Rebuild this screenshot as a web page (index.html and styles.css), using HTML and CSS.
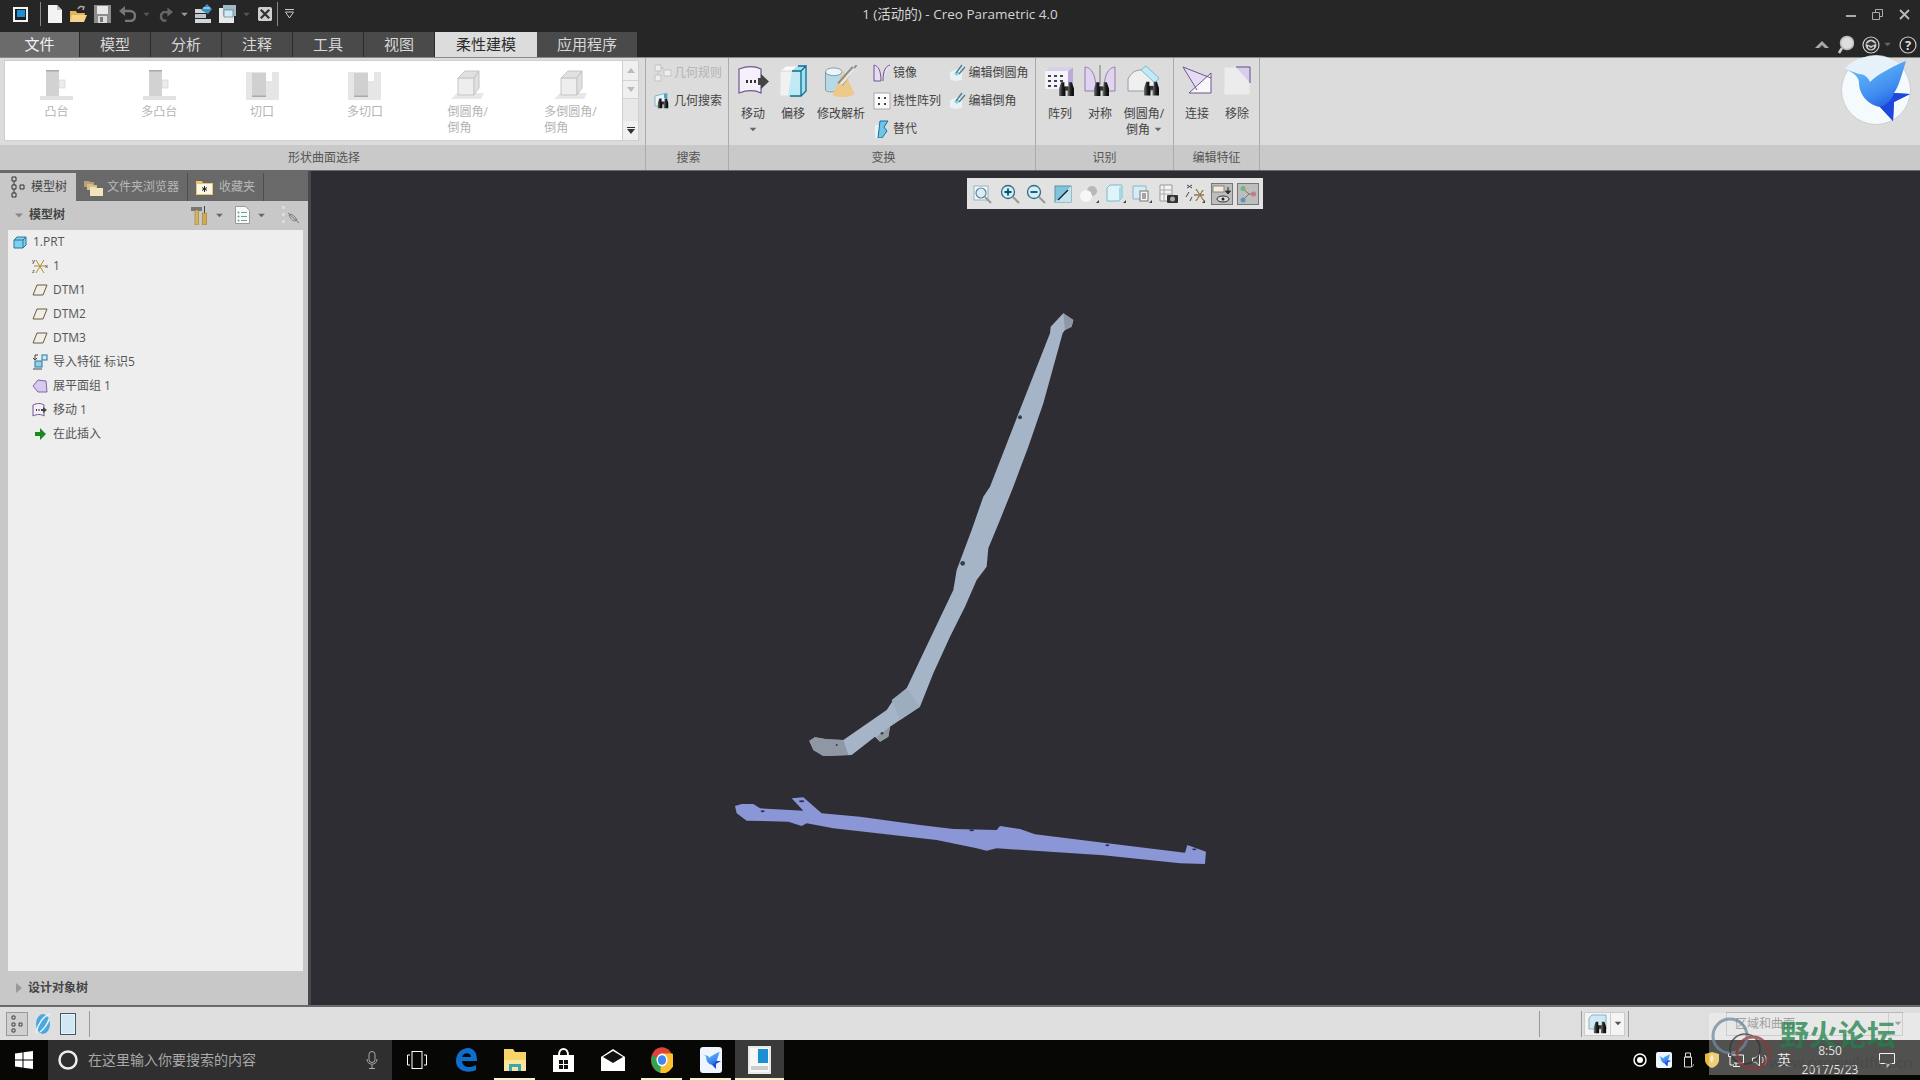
FILE: index.html
```html
<!DOCTYPE html>
<html lang="zh-CN">
<head>
<meta charset="utf-8">
<title>Creo Parametric 4.0</title>
<link rel="stylesheet" href="styles.css">
</head>
<body>
<svg class="sprite" aria-hidden="true">
  <defs>
    <linearGradient id="gbird" x1="0.2" y1="0" x2="0.7" y2="1"><stop offset="0" stop-color="#6cc0f8"/><stop offset=".55" stop-color="#3f8cf0"/><stop offset="1" stop-color="#1238d8"/></linearGradient>
    <linearGradient id="gbino" x1="0" y1="0" x2="1" y2="0"><stop offset="0" stop-color="#777"/><stop offset=".5" stop-color="#222"/><stop offset="1" stop-color="#000"/></linearGradient>
    <symbol id="bird" viewBox="0 0 70 70">
      <path fill="url(#gbird)" d="M4 14 L18 19 C23 19 27 22 29 27 C36 20 50 12 65 6 C61 19 58 31 53 38 L69 39 L53 47 L52 66 L39 52 C27 50 18 39 18 28 C18 22 13 18 4 14 Z"/>
      <path fill="#1c49dc" d="M53 38 L69 39 L53 47 L52 66 L39 52 C46 50 51 45 53 38 Z"/>
    </symbol>
    <symbol id="bino" viewBox="0 0 16 16">
      <path fill="url(#gbino)" d="M3 2h3v4h1v9H1V8z"/>
      <path fill="url(#gbino)" d="M10 2h3l2 6v7H9V6h1z"/>
      <rect x="6.5" y="6" width="3" height="4" fill="#333"/>
    </symbol>
    <symbol id="caret" viewBox="0 0 8 6"><path d="M0 1h8L4 5z"/></symbol>
    <symbol id="datum" viewBox="0 0 16 16"><path d="M5 3h10l-4 10H1z" fill="#efefe8" stroke="#6b5a3c" stroke-width="1"/></symbol>
    <symbol id="pen" viewBox="0 0 18 18">
      <path d="M1 8l8-3 4 3v8l-8 1-4-2z" fill="#e8f2f5"/>
      <path d="M5 10l3-3 3 2-3 3z" fill="#8fd3e6"/>
      <path d="M7 9l6-8M10 10l6-7" stroke="#4b7f92" stroke-width="1.3" fill="none"/>
    </symbol>
    <symbol id="boss" viewBox="0 0 33 30">
      <rect y="26" width="33" height="4" fill="#e2e2e2"/>
      <rect x="6" width="13" height="26" fill="#d2d2d2"/><rect x="6" width="13" height="1.5" fill="#a8a8a8"/>
      <rect x="19" y="10" width="6" height="8" fill="#ececec" stroke="#d6d6d6" stroke-width=".7"/>
    </symbol>
    <symbol id="cut" viewBox="0 0 33 30">
      <rect x="0" y="2" width="33" height="28" fill="#e6e6e6"/>
      <rect x="6" y="3" width="14" height="24" fill="#d0d0d0"/><rect x="6" y="25.500" width="14" height="1.500" fill="#aaa"/>
      <rect x="20" y="2" width="6" height="9" fill="#fff"/>
    </symbol>
    <symbol id="cham" viewBox="0 0 33 30">
      <path d="M0 29l6-6h27l-3 6z" fill="#e8e8e8"/>
      <path d="M7 8h16v17H7z" fill="#eeeeee" stroke="#c6c6c6"/>
      <path d="M7 8l7-7h14l-5 7zM23 8l5-7v17l-5 7z" fill="#e0e0e0" stroke="#c6c6c6"/>
    </symbol>
  </defs>
</svg>

<header class="titlebar">
  <div class="qat">
    <svg width="15" height="15" viewBox="0 0 15 15"><rect width="15" height="15" fill="#f4f4f4"/><rect x="2" y="2" width="11" height="11" fill="#1f1f1f"/><rect x="4" y="3" width="8" height="7" fill="#1b8fd6"/></svg>
    <span class="qsep"></span>
    <svg width="14" height="18" viewBox="0 0 14 18"><path d="M0 0h9l5 5v13H0z" fill="#f3f3f3"/><path d="M9 0v5h5z" fill="#bbb"/></svg>
    <svg width="18" height="18" viewBox="0 0 18 18"><path d="M1 6h6l1 2h8l-2 9H1z" fill="#e3b45a"/><path d="M3 10h15l-3 7H1z" fill="#f3d48a"/><path d="M9 4c1-3 4-3 6-2l-1 3" fill="none" stroke="#aaa" stroke-width="1.500"/></svg>
    <svg width="17" height="18" viewBox="0 0 17 18"><rect width="17" height="18" fill="#8d8d8d"/><rect x="3" y="1" width="11" height="8" fill="#e8e8e8"/><rect x="4" y="11" width="9" height="7" fill="#dcdcdc"/><rect x="6" y="12" width="3" height="5" fill="#777"/></svg>
    <svg width="18" height="16" viewBox="0 0 18 16"><path d="M3 5h9a5 5 0 0 1 0 10H7" fill="none" stroke="#777" stroke-width="2.500"/><path d="M7 0v10L1 5z" fill="#777"/></svg>
    <svg class="qcaret" width="7" height="5"><use href="#caret"/></svg>
    <svg width="17" height="16" viewBox="0 0 18 16"><path d="M15 6H7a5 5 0 0 0 0 9h3" fill="none" stroke="#666" stroke-width="2.500"/><path d="M11 1v10l6-5z" fill="#666"/></svg>
    <svg class="qcaret lit" width="7" height="5"><use href="#caret"/></svg>
    <svg width="17" height="20" viewBox="0 0 17 20"><rect x="0" y="5" width="11" height="4" fill="#cfd6dc"/><rect x="0" y="10" width="11" height="4" fill="#bcc6cc"/><rect x="0" y="15" width="16" height="4" fill="#cfd6dc"/><path d="M6 6l6-6 5 5-4 5z" fill="#3d90c4"/><path d="M8 4h7" stroke="#e6f3fa"/></svg>
    <svg width="17" height="18" viewBox="0 0 17 18"><rect y="3" width="15" height="15" fill="#e9e9e9"/><rect x="4" y="0" width="13" height="11" fill="#9fb9c6"/><rect x="5" y="5" width="9" height="7" fill="#cfeaf4" stroke="#5d7f8f" stroke-width=".7"/></svg>
    <svg class="qcaret" width="7" height="5"><use href="#caret"/></svg>
    <svg class="qclose" width="14" height="14" viewBox="0 0 15 15"><rect width="15" height="15" rx="2" fill="#d0d0d0"/><path d="M3 3l9 9M12 3l-9 9" stroke="#333" stroke-width="2.500"/></svg>
    <span class="qsep qsep-b"></span>
    <svg class="more" width="9" height="10" viewBox="0 0 9 10"><path d="M0 .5h9M.5 3h8L4.500 9z" fill="none" stroke="#c8c8c8"/></svg>
  </div>
  <div class="wintitle">1 (活动的) - Creo Parametric 4.0</div>
  <div class="winctl">
    <svg width="10" height="10" viewBox="0 0 10 10"><path d="M0 7h10" stroke="#aaa" stroke-width="2"/></svg>
    <svg width="11" height="11" viewBox="0 0 11 11"><path d="M.5 3.500h7v7h-7zM3.500 3V.5h7v7H8" fill="none" stroke="#aaa"/></svg>
    <svg width="11" height="11" viewBox="0 0 11 11"><path d="M1 1l9 9M10 1l-9 9" stroke="#bbb" stroke-width="1.800"/></svg>
  </div>
</header>

<nav class="tabbar">
  <div class="tab tab-file">文件</div>
  <div class="tab">模型</div>
  <div class="tab">分析</div>
  <div class="tab">注释</div>
  <div class="tab">工具</div>
  <div class="tab">视图</div>
  <div class="tab tab-active">柔性建模</div>
  <div class="tab tab-app">应用程序</div>
  <div class="helpicons">
    <svg width="14" height="9" viewBox="0 0 14 9"><path d="M0 8l7-7 7 7z" fill="#aaa"/><path d="M4 8l3-3 3 3z" fill="#333"/></svg>
    <svg width="17" height="20" viewBox="0 0 17 20"><circle cx="10" cy="8" r="6.500" fill="#ddd" stroke="#bbb" stroke-width="1.500"/><path d="M5 13l-3 5" stroke="#ccc" stroke-width="2.500"/></svg>
    <svg width="18" height="18" viewBox="0 0 18 18"><circle cx="9" cy="9" r="8" fill="none" stroke="#ccc" stroke-width="1.200"/><circle cx="9" cy="9" r="5.500" fill="#ccc"/><path d="M4 8l5-3 5 3-5 2zM6 10l3 2 3-2v2l-3 1.500L6 12z" fill="#333"/></svg>
    <svg class="hcaret" width="7" height="5"><use href="#caret"/></svg>
    <svg width="18" height="18" viewBox="0 0 18 18"><circle cx="9" cy="9" r="8" fill="#222" stroke="#ccc" stroke-width="1.200"/><text class="helpq" x="9" y="13.500" text-anchor="middle">?</text></svg>
  </div>
</nav>

<section class="ribbon">
  <div class="group g-gallery">
    <div class="gbody gallery-wrap">
      <div class="gallery">
        <div class="gitem"><svg width="33" height="30"><use href="#boss"/></svg><span>凸台</span></div>
        <div class="gitem"><svg width="33" height="30"><use href="#boss"/></svg><span>多凸台</span></div>
        <div class="gitem"><svg width="33" height="30"><use href="#cut"/></svg><span>切口</span></div>
        <div class="gitem"><svg width="33" height="30"><use href="#cut"/></svg><span>多切口</span></div>
        <div class="gitem"><svg width="33" height="30"><use href="#cham"/></svg><span class="left">倒圆角/<br>倒角</span></div>
        <div class="gitem"><svg width="33" height="30"><use href="#cham"/></svg><span class="left">多倒圆角/<br>倒角</span></div>
      </div>
      <div class="scroller">
        <div class="sbtn"><svg width="8" height="6" viewBox="0 0 8 6"><path d="M0 5h8L4 0z" fill="#bbb"/></svg></div>
        <div class="sbtn sbtn-b"><svg width="8" height="6" viewBox="0 0 8 6"><path d="M0 0h8L4 5z" fill="#bbb"/></svg></div>
        <div class="strack"></div>
        <div class="sbtn"><svg width="8" height="7" viewBox="0 0 8 7"><path d="M0 0h8v1H0zM0 2h8L4 7z" fill="#333"/></svg></div>
      </div>
    </div>
    <div class="glabel">形状曲面选择</div>
  </div>

  <div class="group g-search">
    <div class="gbody smallcol">
      <div class="small disabled"><svg width="18" height="18" viewBox="0 0 18 18"><path d="M1 1h6v6H1zM1 11h6v6H1zM10 6h7v6h-7zM7 4h3M4 7v4" fill="#eee" stroke="#c2c2c2"/></svg><span>几何规则</span></div>
      <div class="small"><svg width="18" height="18" viewBox="0 0 18 18"><path d="M1 4l12-3v13H1z" fill="#e8f4f8" stroke="#87b4c4"/><path d="M10 2h3v4h-3z" fill="#4aa5c8"/><use href="#bino" x="3" y="5" width="12" height="12"/></svg><span>几何搜索</span></div>
    </div>
    <div class="glabel">搜索</div>
  </div>

  <div class="group g-trans">
    <div class="gbody rowbody">
      <div class="big w40"><svg width="32" height="32" viewBox="0 0 32 32"><path d="M2 4c8-3 16-3 22 0v24c-6-3-14-3-22 0z" fill="#f6f0fa" stroke="#6f5590" stroke-width="1.200"/><path d="M9 15h2v3H9zM13 15h2v3h-2zM17 15h2v3h-2z" fill="#333"/><path d="M21 13h3v-4l8 7.500-8 7.500v-4h-3z" fill="#444"/></svg><span>移动</span><svg class="bcaret" width="8" height="5"><use href="#caret"/></svg></div>
      <div class="big w40"><svg width="28" height="32" viewBox="0 0 28 32"><path d="M1 6h13v25H1z" fill="#f1f1f1" stroke="#ddd"/><path d="M1 6l6-5h12l-6 5z" fill="#fafafa" stroke="#ddd"/><path d="M13 6h9v25H9z" fill="#bfe9f5"/><path d="M13 6l6-5h8l-5 5zM22 6l5-5v25l-5 5z" fill="#a6e0f0"/><path d="M13 6h9v25H11M22 6l5-5v25l-5 5M19 1h8" fill="none" stroke="#0a6f8f" stroke-width="1.300"/></svg><span>偏移</span></div>
      <div class="big w56"><svg width="34" height="33" viewBox="0 0 34 33"><path d="M1 7h17v19H1z" fill="#b5d9e6"/><ellipse cx="9.500" cy="7" rx="8.500" ry="4" fill="#eef4f8" stroke="#7d9aa8"/><path d="M1 7v19c2 2 6 2 10 1" fill="none" stroke="#7d9aa8"/><path d="M20 6L8 31c6 3 18 3 23-1z" fill="#ecc88a"/><path d="M14 19L29 2M18 21L33 0" stroke="#8a8a8a" stroke-width="1.800"/><path d="M16 19l14-16 2 1-14 17z" fill="#e6e6e6"/></svg><span>修改解析</span></div>
      <div class="smallcol col1">
        <div class="small"><svg width="18" height="18" viewBox="0 0 18 18"><path d="M1 1c4 1 7 5 7 16H1zM17 1c-4 1-7 5-7 16" fill="#e8dcf4" stroke="#6f5590"/></svg><span>镜像</span></div>
        <div class="small"><svg width="18" height="18" viewBox="0 0 18 18"><rect x="1" y="1" width="16" height="16" fill="#fafafa" stroke="#aaa"/><path d="M5 5h2v2H5zM11 5h2v2h-2zM5 11h2v2H5zM11 11h2v2h-2z" fill="#444"/></svg><span>挠性阵列</span></div>
        <div class="small"><svg width="18" height="18" viewBox="0 0 18 18"><path d="M2 5h5v13H2z" fill="#e8f4f8"/><path d="M7 1h8l-4 6 3 4-5 7H5z" fill="#6ec6e6" stroke="#1d6f96"/></svg><span>替代</span></div>
      </div>
      <div class="smallcol col2">
        <div class="small"><svg width="18" height="18"><use href="#pen"/></svg><span>编辑倒圆角</span></div>
        <div class="small"><svg width="18" height="18"><use href="#pen"/></svg><span>编辑倒角</span></div>
      </div>
    </div>
    <div class="glabel">变换</div>
  </div>

  <div class="group g-recog">
    <div class="gbody rowbody recog">
      <div class="big w40"><svg width="32" height="32" viewBox="0 0 32 32"><path d="M1 6l4-4h24v22H1z" fill="#f4f4f8"/><path d="M24 6l5-4v22l-5 4z" fill="#bba9d8"/><path d="M1 6l4-4h24l-5 4z" fill="#d9cfe9"/><path d="M4 10h3v2H4zM10 10h3v2h-3zM16 10h3v2h-3zM4 15h3v2H4zM10 15h3v2h-3zM16 15h3v2h-3zM4 20h3v2H4zM10 20h3v2h-3z" fill="#45405a"/><use href="#bino" x="14" y="15" width="17" height="17"/></svg><span>阵列</span></div>
      <div class="big w36"><svg width="32" height="32" viewBox="0 0 32 32"><path d="M1 2c7 1 11 8 11 24H1z" fill="#e0d4f0" stroke="#7d68a0" stroke-width=".8"/><path d="M31 2c-7 1-11 8-11 24h11z" fill="#e0d4f0" stroke="#7d68a0" stroke-width=".8"/><path d="M16 0v20" stroke="#999" stroke-width="1.500"/><use href="#bino" x="9" y="15" width="17" height="17"/></svg><span>对称</span></div>
      <div class="big w54"><svg width="34" height="32" viewBox="0 0 34 32"><path d="M1 26V14C4 8 8 5 14 5h6l10 12v9z" fill="#eef0f0" stroke="#9a9aa8"/><path d="M14 5l5-4 13 12-4 5z" fill="#bfeaf6" stroke="#7fb8cc"/><use href="#bino" x="16" y="14" width="17" height="18"/></svg><span>倒圆角/<br>倒角<svg class="icaret" width="8" height="5"><use href="#caret"/></svg></span></div>
    </div>
    <div class="glabel">识别</div>
  </div>

  <div class="group g-edit">
    <div class="gbody rowbody edit">
      <div class="big w40"><svg width="30" height="32" viewBox="0 0 30 32"><path d="M1 2l28 11-14 16z" fill="#e5dcf2"/><path d="M29 8v20H7z" fill="#f8f8f8"/><path d="M1 2l28 11M1 2l14 23M29 8v20H7z" fill="none" stroke="#6f5590"/></svg><span>连接</span></div>
      <div class="big w40"><svg width="28" height="30" viewBox="0 0 28 30"><path d="M1 1h12l14 14v14H1z" fill="#ececec" stroke="#ddd"/><path d="M13 1h14v16z" fill="#d9ccec"/><path d="M13 1h14v16" fill="none" stroke="#5e4a88"/></svg><span>移除</span></div>
    </div>
    <div class="glabel">编辑特征</div>
  </div>

  <div class="group g-rest">
    <div class="gbody"></div>
    <div class="glabel"></div>
  </div>

  <svg class="logo" width="70" height="70" viewBox="0 0 70 70"><circle cx="35" cy="35" r="34.500" fill="#f5fafd" stroke="#cfcfcf"/><path d="M4 14C10 5 22 1 35 1c10 0 20 4 26 10L30 28 18 19z" fill="#e6f2fb"/><use href="#bird" width="70" height="70"/></svg>
</section>

<main class="main">
  <aside class="panel">
    <div class="ptabs">
      <div class="ptab ptab-on"><svg width="14" height="22" viewBox="0 0 14 22"><path d="M1 1h4v4H1zM1 9h4v4H1zM1 17h4v4H1zM9 9h4v4H9zM3 5v4M3 13v4" fill="none" stroke="#333"/></svg><span>模型树</span></div>
      <div class="ptab ptab-2"><svg width="19" height="17" viewBox="0 0 19 17"><path d="M0 2h5l1 1h4v5H0z" fill="#b9a078"/><path d="M3 5h5l1 1h4v5H3z" fill="#d5bd90"/><path d="M6 8h5l1 1h7v8H6z" fill="#f1e4b8"/></svg><span>文件夹浏览器</span></div>
      <div class="ptab ptab-3"><svg width="17" height="15" viewBox="0 0 17 15"><path d="M0 1h6l1 2h10v12H0z" fill="#e9c56e"/><rect x="1" y="4" width="15" height="10" fill="#fbf7e6"/><path d="M8.500 6v6M6 7.500l5 3M11 7.500l-5 3" stroke="#222"/></svg><span>收藏夹</span></div>
    </div>
    <div class="phead">
      <svg width="8" height="7"><use href="#caret" class="hd"/></svg>
      <strong>模型树</strong>
      <svg class="t1" width="17" height="19" viewBox="0 0 17 19"><path d="M0 1h11v4H0z" fill="#777"/><rect x="4" y="4" width="3.500" height="15" fill="#d6b45e" stroke="#8a7030" stroke-width=".5"/><rect x="13" y="0" width="1" height="7" fill="#444"/><rect x="11.500" y="7" width="4" height="12" fill="#d6a84a" stroke="#8a7030" stroke-width=".5"/></svg>
      <svg class="hcar" width="7" height="5"><use href="#caret"/></svg>
      <svg class="t2" width="15" height="18" viewBox="0 0 15 18"><path d="M.5.5h10l4 4v13H.500z" fill="#fafafa" stroke="#999"/><path d="M3 6h1v1H3zM3 10h1v1H3zM3 14h1v1H3zM6 6.500h6M6 10.500h6M6 14.500h6" stroke="#6a8"/></svg>
      <svg class="hcar" width="7" height="5"><use href="#caret"/></svg>
      <svg class="t3" width="20" height="18" viewBox="0 0 20 18"><path d="M2 0h3v3H2zM2 7h3v3H2zM2 14h3v3H2z" fill="#dcdcdc"/><path d="M9 9c2-2 5 0 8 5-3 2-6 0-8-5zM8 7l11 10" fill="none" stroke="#777"/></svg>
    </div>
    <ul class="tree">
      <li class="root"><svg width="14" height="13" viewBox="0 0 14 13"><path d="M1 4l3-3h9v8l-3 3H1z" fill="#7fd0ee" stroke="#27769a"/><path d="M1 4h9v8M10 4l3-3" fill="none" stroke="#27769a"/></svg><span>1.PRT</span></li>
      <li><svg width="16" height="16" viewBox="0 0 16 16"><path d="M4 2l8 13M12 2L4 15M2 8h12" stroke="#b08d2c" fill="none"/><text class="axis" x="0" y="5">y</text><text class="axis" x="0" y="15">z</text><text class="axis" x="13" y="10">x</text></svg><span>1</span></li>
      <li><svg width="16" height="16"><use href="#datum"/></svg><span>DTM1</span></li>
      <li><svg width="16" height="16"><use href="#datum"/></svg><span>DTM2</span></li>
      <li><svg width="16" height="16"><use href="#datum"/></svg><span>DTM3</span></li>
      <li><svg width="16" height="16" viewBox="0 0 16 16"><rect x="3" y="7" width="7" height="6" fill="#8fd3ea" stroke="#27769a"/><rect x="10" y="1" width="5" height="5" fill="#cfeaf4" stroke="#27769a"/><path d="M1 15h9M6 1H3v4M1 4l2 2 2-2" fill="none" stroke="#444"/></svg><span>导入特征 标识5</span></li>
      <li><svg width="16" height="16" viewBox="0 0 16 16"><path d="M1 8l5-6 8 1 1 11-9 0z" fill="#d8c9ee" stroke="#7d68a0"/></svg><span>展平面组 1</span></li>
      <li><svg width="16" height="16" viewBox="0 0 16 16"><path d="M1 3c4-2 8-2 11 0v11c-3-2-7-2-11 0z" fill="#f4eef8" stroke="#6f5590"/><path d="M4 7h1v2H4zM6.500 7h1v2h-1z" fill="#333"/><path d="M9 7h2V5l4 3-4 3V9H9z" fill="#444"/></svg><span>移动 1</span></li>
      <li><svg width="16" height="16" viewBox="0 0 16 16"><path d="M3 6h5V2l6 6-6 6v-4H3z" fill="#1c8a22"/></svg><span>在此插入</span></li>
    </ul>
    <div class="pfoot"><svg width="6" height="10" viewBox="0 0 6 10"><path d="M0 0l6 5-6 5z" fill="#999"/></svg><strong>设计对象树</strong></div>
  </aside>

  <div class="viewport">
    <div class="vtools">
      <span class="vt"><svg width="20" height="20" viewBox="0 0 20 20"><rect x="1" y="2" width="14" height="14" fill="#f4f8fa" stroke="#8fb4c4"/><circle cx="8" cy="9" r="5" fill="#dcecf2" stroke="#5f8496" stroke-width="1.200"/><path d="M12 13l6 6" stroke="#999" stroke-width="2"/></svg></span>
      <span class="vt"><svg width="20" height="20" viewBox="0 0 20 20"><circle cx="8" cy="8" r="6.500" fill="#d4edf4" stroke="#2b6f86" stroke-width="1.300"/><path d="M8 4.500v7M4.500 8h7" stroke="#0b4f68" stroke-width="1.800"/><path d="M13 13l6 6" stroke="#999" stroke-width="2"/></svg></span>
      <span class="vt"><svg width="20" height="20" viewBox="0 0 20 20"><circle cx="8" cy="8" r="6.500" fill="#d4edf4" stroke="#2b6f86" stroke-width="1.300"/><path d="M4.500 8h7" stroke="#0b4f68" stroke-width="1.800"/><path d="M13 13l6 6" stroke="#999" stroke-width="2"/></svg></span>
      <span class="vt"><svg width="18" height="18" viewBox="0 0 18 18"><rect x="1" y="1" width="16" height="16" fill="#7fc4da" stroke="#5a93a8"/><path d="M1 17L17 1v16z" fill="#c4e3ec"/><path d="M4 15L14 5" stroke="#123" stroke-width="1.500"/></svg></span>
      <span class="vt"><svg width="20" height="20" viewBox="0 0 20 20"><circle cx="13" cy="7" r="5" fill="#b8b8b8"/><circle cx="7" cy="12" r="6" fill="#f6f6f6"/><path d="M17 19h3v-3z" fill="#444"/></svg></span>
      <span class="vt"><svg width="20" height="20" viewBox="0 0 20 20"><path d="M1 4l3-3h12v13l-3 3H1z" fill="#dff3fa" stroke="#7fb8cc"/><path d="M13 4l3-3v13l-3 3z" fill="#9fd9ea"/><path d="M17 19h3v-3z" fill="#444"/></svg></span>
      <span class="vt"><svg width="20" height="20" viewBox="0 0 20 20"><path d="M1 2h13v13H1z" fill="#d4edf4" stroke="#8fb4c4"/><rect x="8" y="7" width="8" height="10" fill="#f4f4f4" stroke="#777"/><path d="M10 10h4M10 12h4M10 14h4" stroke="#555"/><path d="M17 19h3v-3z" fill="#444"/></svg></span>
      <span class="vt"><svg width="20" height="20" viewBox="0 0 20 20"><path d="M1 1h12v16H1z" fill="#f4f4f4" stroke="#999"/><path d="M1 6h12M1 10h12M5 1v16" stroke="#aaa"/><rect x="8" y="11" width="11" height="8" rx="1" fill="#333"/><circle cx="13.500" cy="15" r="2.500" fill="#aaa"/></svg></span>
      <span class="vt"><svg width="20" height="20" viewBox="0 0 20 20"><path d="M2 1l5 3M7 1L2 4M4 8l-3 5M5 17l2-4M11 5l8 12M18 6L11 17M9 11h10" stroke="#444" fill="none"/><path d="M11 5l8 12M18 6L11 17" stroke="#b08d2c"/><path d="M17 19h3v-3z" fill="#444"/></svg></span>
      <span class="vt vt-on"><svg width="20" height="20" viewBox="0 0 20 20"><rect x="1" y="2" width="11" height="6" fill="#f4ecd8" stroke="#888"/><path d="M16 3v4M13.500 7h5L16 10z" stroke="#333" fill="#333"/><ellipse cx="11" cy="15" rx="6" ry="3" fill="#ddd" stroke="#333"/><circle cx="11" cy="15" r="1.500" fill="#222"/></svg></span>
      <span class="vt vt-on"><svg width="20" height="20" viewBox="0 0 20 20"><path d="M5 5l6 5-6 6M11 10h4" stroke="#777" fill="none"/><circle cx="5" cy="4.500" r="2.500" fill="#6fb87a"/><circle cx="15.500" cy="10" r="2.500" fill="#c67b82"/><circle cx="5" cy="16" r="2.500" fill="#5a96b8"/></svg></span>
    </div>
    <svg class="scene" viewBox="311 171 1609 834" preserveAspectRatio="none" aria-hidden="true">
      <g transform="translate(780 300) scale(.33333)">
        <path fill="#a5b4c6" d="M850 40L880 60L875 80L855 90L848 100L790 310L745 440L700 560L660 660L625 745L620 800L590 840L555 920L510 1010L460 1120L420 1220L360 1260L330 1280L325 1310L300 1325L285 1310L215 1365L130 1368L100 1350L88 1322L105 1312L140 1318L190 1320L320 1230L340 1200L380 1165L420 1080L520 870L530 810L575 690L610 590L630 560L700 380L810 100L812 80Z"/>
        <path fill="#8e97a3" d="M850 40L880 60L875 80L855 90Z"/>
        <path fill="#8e97a3" d="M88 1322L105 1312L140 1318L190 1320L205 1365L130 1368L100 1350Z"/>
        <path fill="#8f98a3" d="M330 1280L325 1310L300 1325L290 1310Z"/>
        <path fill="#9dadc0" d="M380 1165L420 1220L360 1260L335 1200Z"/>
        <g fill="#3a3d46"><circle cx="720" cy="352" r="6"/><circle cx="548" cy="790" r="7"/><circle cx="170" cy="1335" r="3"/><circle cx="306" cy="1300" r="4"/></g>
      </g>
      <g transform="translate(720 780) scale(.33333)">
        <path fill="#8a96d6" d="M45 78L65 72L100 72L120 85L250 92L215 55L250 52L305 100L420 110L600 135L700 147L830 150L840 138L900 147L945 163L1150 188L1395 218L1402 195L1458 215L1455 252L1380 250L1150 226L830 205L800 212L770 205L650 180L340 145L260 130L245 138L205 125L80 122L50 100Z"/>
        <g fill="#2c3060"><ellipse cx="128" cy="94" rx="6" ry="3"/><ellipse cx="245" cy="64" rx="8" ry="3"/><ellipse cx="755" cy="151" rx="7" ry="3"/><ellipse cx="1162" cy="196" rx="6" ry="3"/><ellipse cx="1423" cy="208" rx="7" ry="2.500"/></g>
      </g>
    </svg>
  </div>
</main>

<footer class="status">
  <span class="stbox"><svg width="12" height="18" viewBox="0 0 12 18"><path d="M1 1h3v3H1zM1 8h3v3H1zM1 14h3v3H1zM8 8h3v3H8z" fill="none" stroke="#444"/></svg></span>
  <svg class="stglobe" width="17" height="24" viewBox="0 0 17 24"><ellipse cx="9" cy="12" rx="7" ry="10" fill="#4aa8e0"/><path d="M2 21C4 12 9 4 16 2M6 20c3-2 8-8 9-13" fill="none" stroke="#e8f4f8" stroke-width="1.500"/></svg>
  <svg class="stwin" width="16" height="22" viewBox="0 0 16 22"><rect x=".5" y=".5" width="15" height="21" fill="#e8f4f8" stroke="#456"/><rect x="2" y="2" width="12" height="18" fill="#cfe8f2"/></svg>
  <span class="stsep"></span>
  <span class="stsep s2"></span>
  <span class="stsep s3"></span>
  <span class="stbtn"><svg width="20" height="20" viewBox="0 0 20 20"><path d="M1 4l3-3h14v14H1z" fill="#cfeaf4" stroke="#87b4c4"/><use href="#bino" x="5" y="6" width="14" height="14"/></svg></span>
  <span class="stdrop"><svg width="8" height="5"><use href="#caret"/></svg></span>
  <span class="stsep s4"></span>
  <div class="combo"><span>区域和曲面</span><i></i><svg width="8" height="5"><use href="#caret"/></svg></div>
</footer>

<footer class="taskbar">
  <div class="start"><svg width="18" height="18" viewBox="0 0 18 18"><path d="M0 2.500L7.500 1.500V8.500H0zM8.500 1.300L18 0V8.500H8.500zM0 9.500H7.500V16.500L0 15.500zM8.500 9.500H18V18L8.500 16.700z" fill="#fff"/></svg></div>
  <div class="search">
    <svg width="20" height="20" viewBox="0 0 20 20"><circle cx="10" cy="10" r="8.500" fill="none" stroke="#eee" stroke-width="2.500"/></svg>
    <span>在这里输入你要搜索的内容</span>
    <svg class="mic" width="12" height="18" viewBox="0 0 12 18"><rect x="3" y="0.500" width="6" height="11" rx="3" fill="none" stroke="#aaa"/><path d="M1 8c0 7 10 7 10 0M6 14v3M3 17.500h6" fill="none" stroke="#aaa"/></svg>
  </div>
  <div class="tasks">
    <span class="task"><svg width="20" height="18" viewBox="0 0 20 18"><rect x="5" y=".5" width="10" height="17" fill="none" stroke="#fff"/><path d="M3 4H.5v10H3M17 4h2.500v10H17" fill="none" stroke="#fff"/></svg></span>
    <span class="task"><svg width="22" height="24" viewBox="0 0 22 24"><path d="M1 13C1 5 7 0 13 0c6 0 9 5 9 13H7c0 6 8 8 14 4v5c-8 4-20 1-20-9zM7 9h9c0-5-8-5-9 0z" fill="#0c6fcf"/></svg></span>
    <span class="task on"><svg width="22" height="22" viewBox="0 0 22 22"><path d="M0 0h9l2 3h11v19H0z" fill="#f6d468"/><path d="M0 11h22v11H0z" fill="#fbe79a"/><path d="M5 22v-7h12v7h-3v-4H8v4z" fill="#3aa7b8"/></svg></span>
    <span class="task"><svg width="21" height="24" viewBox="0 0 21 24"><path d="M0 7h21v17H0z" fill="#fff"/><path d="M6 7c0-8 9-8 9 0" fill="none" stroke="#fff" stroke-width="2"/><path d="M6 12h4v4H6zM11 12h4v4h-4zM6 17h4v4H6zM11 17h4v4h-4z" fill="#111"/></svg></span>
    <span class="task"><svg width="24" height="22" viewBox="0 0 24 22"><path d="M0 8L12 0l12 8v14H0z" fill="#fff"/><path d="M2 8l10-6 10 6-10 6z" fill="#111"/><path d="M0 8l12 7 12-7" fill="none" stroke="#fff"/></svg></span>
    <span class="task on"><svg width="22" height="26" viewBox="0 0 24 28"><ellipse cx="12" cy="14" rx="12" ry="14" fill="#db4437"/><path d="M12 14L1.500 9A12 14 0 0 0 10 27.800z" fill="#2aa84f"/><path d="M12 7h11.500A12 14 0 0 1 10 27.800z" fill="#fbc02d"/><ellipse cx="12" cy="14" rx="6" ry="7" fill="#fff"/><ellipse cx="12" cy="14" rx="4.500" ry="5.300" fill="#4285f4"/></svg></span>
    <span class="task on"><span class="birdtile"><svg width="20" height="24" viewBox="0 0 70 70"><use href="#bird"/></svg></span></span>
    <span class="task on active"><svg width="23" height="28" viewBox="0 0 23 28"><rect width="23" height="28" fill="#e8e8e8"/><rect x="2" y="2" width="19" height="24" fill="#f7f7f7"/><rect x="10" y="3" width="10" height="14" fill="#1b8fd6"/><rect x="3" y="20" width="17" height="4" fill="#ccc"/></svg></span>
  </div>
  <div class="tray">
    <span class="ti"><svg width="14" height="14" viewBox="0 0 14 14"><circle cx="7" cy="7" r="6" fill="none" stroke="#fff" stroke-width="1.500"/><circle cx="7" cy="7" r="3" fill="#fff"/></svg></span>
    <span class="ti"><span class="birdtile small-tile"><svg width="14" height="14" viewBox="0 0 70 70"><use href="#bird"/></svg></span></span>
    <span class="ti"><svg width="12" height="16" viewBox="0 0 12 16"><path d="M3.500 1h5v4h-5zM2.500 5h7v10h-7z" fill="none" stroke="#ddd"/><path d="M9 13l1.500 1.500L12 12" stroke="#aaa" fill="none"/></svg></span>
    <span class="ti"><svg width="14" height="16" viewBox="0 0 14 16"><path d="M0 2l7-2 7 2v6c0 4-4 7-7 8-3-1-7-4-7-8z" fill="#e9b93f"/><path d="M7 3c3 3 1 5 0 8-2-2-3-5 0-8z" fill="#f7e7b0"/></svg></span>
    <span class="ti"><svg width="16" height="14" viewBox="0 0 16 14"><path d="M.5.500h3v3h-3zM3.500 2h12v8H6M8 10v3M5 13.500h7M2 4v8h4" fill="none" stroke="#eee"/></svg></span>
    <span class="ti"><svg width="16" height="14" viewBox="0 0 16 14"><path d="M.5 5h3l4-4v12l-4-4h-3z" fill="none" stroke="#ddd"/><path d="M10 4c1.500 2 1.500 4 0 6M12.500 2c2.500 3 2.500 7 0 10" fill="none" stroke="#ddd"/></svg></span>
    <span class="ti ime">英</span>
    <div class="clock"><span>8:50</span><span>2017/5/23</span></div>
    <span class="notif"><svg width="16" height="15" viewBox="0 0 16 15"><path d="M.5.500h15v10h-5l-2.500 4v-4H.5z" fill="none" stroke="#eee"/></svg></span>
  </div>
</footer>

<div class="watermark">
  <svg class="wmlogo" width="72" height="60" viewBox="0 0 72 60"><circle cx="21" cy="21" r="17" fill="none" stroke="#6f8a9e" stroke-width="3"/><circle cx="36" cy="34" r="15" fill="none" stroke="#333" stroke-width="1.500"/><circle cx="44" cy="38" r="16" fill="none" stroke="#8c3a3a" stroke-width="3"/></svg>
  <span class="wmt">野火论坛</span>
  <span class="wmu">www.proewildfire.cn</span>
</div>
</body>
</html>
```

FILE: styles.css
```css
* { box-sizing: border-box; }
html, body { margin: 0; padding: 0; }
body {
  width: 1920px; height: 1080px; overflow: hidden; position: relative;
  display: flex; flex-direction: column;
  font: 12px/16px "Open Sans", "Noto Sans CJK SC", sans-serif;
  color: #444; background: #262626;
}
svg { display: block; flex: none; }
.sprite { position: absolute; width: 0; height: 0; }
ul { list-style: none; margin: 0; padding: 0; }

/* title bar */
.titlebar { height: 32px; flex: none; background: #262626; display: grid; grid-template-columns: 1fr auto 1fr; align-items: center; }
.qat { display: flex; align-items: center; gap: 7px; padding-left: 13px; fill: #666; margin-top: -4px; }
.qsep { width: 1px; height: 24px; background: #888; margin-left: 5px; }
.qsep-b { margin-left: -2px; }
.qclose { margin-left: 1px; }
.qcaret { fill: #555; }
.qcaret.lit { fill: #9a9a9a; }
.wintitle { font-size: 13.5px; color: #d4d4d4; line-height: 20px; margin-top: -4px; }
.winctl { display: flex; justify-content: flex-end; align-items: center; gap: 16px; padding-right: 10px; margin-top: -4px; }

/* main tabs */
.tabbar { height: 25px; flex: none; display: flex; background: #262626; position: relative; }
.tab { width: 71px; display: flex; align-items: center; justify-content: center; padding-bottom: 2px; font-size: 15px; color: #d8d8d8; background: #4a4a4a; border-right: 1px solid #2a2a2a; }
.tab-file { width: 80px; background: #6b6b6b; color: #f2f2f2; }
.tab-active { width: 102px; background: #dcdcdc; color: #2c2c2c; border-right: 0; }
.tab-app { width: 100px; border-right: 0; }
.helpicons { margin-left: auto; display: flex; align-items: center; gap: 8px; padding-right: 3px; fill: #666; }
.hcaret { margin: 0 0 0 -4px; }
.helpq { font: bold 13px "Open Sans", sans-serif; fill: #ddd; }

/* ribbon */
.ribbon { height: 114px; flex: none; display: flex; position: relative; background: #dcdcdc; border-top: 1px solid #8a8a8a; border-bottom: 1px solid #6a6a6a; }
.group { display: flex; flex-direction: column; border-right: 1px solid #ababab; }
.gbody { height: 87px; }
.glabel { height: 25px; background: #c9c9c9; display: flex; align-items: center; justify-content: center; color: #555; line-height: 25px; }
.g-gallery .glabel, .g-search .glabel, .g-trans .glabel { padding-left: 3px; }
.g-gallery { width: 646px; }
.g-search { width: 83px; }
.g-trans { width: 307px; }
.g-recog { width: 138px; }
.g-edit { width: 86px; }
.g-rest { flex: 1; border-right: 0; }
.gallery-wrap { display: flex; padding: 2px 6px 0 4px; align-items: flex-start; }
.gallery { width: 618px; height: 81px; display: flex; background: #fff; border: 1px solid #cfcfcf; border-right: 0; }
.gitem { width: 103px; display: flex; flex-direction: column; align-items: center; padding-top: 9px; color: #b4b4b4; gap: 4px; }
.gitem span { line-height: 16px; text-align: center; }
.gitem .left { text-align: left; }
.scroller { width: 18px; height: 81px; display: flex; flex-direction: column; background: #eee; border: 1px solid #cfcfcf; }
.sbtn { height: 19px; display: flex; align-items: center; justify-content: center; background: #f0f0f0; }
.sbtn-b { border-top: 1px solid #d4d4d4; border-bottom: 1px solid #d4d4d4; }
.strack { flex: 1; background: #e8e8e8; }
.smallcol { display: flex; flex-direction: column; padding-top: 1px; }
.small { height: 28px; display: flex; align-items: center; gap: 2px; white-space: nowrap; color: #444; }
.g-search .small { padding-left: 8px; }
.disabled { color: #b4b4b4; }
.rowbody { display: flex; align-items: flex-start; padding-left: 4px; }
.big { display: flex; flex-direction: column; align-items: center; padding-top: 7px; flex: none; text-align: center; }
.big > svg:first-child { height: 32px; margin-bottom: 9px; }
.big span { line-height: 16px; }
.w40 { width: 40px; }
.w36 { width: 40px; }
.w54 { width: 48px; }
.w56 { width: 56px; }
.bcaret { fill: #666; margin-top: 5px; }
.icaret { display: inline-block; fill: #666; margin-left: 4px; vertical-align: 2px; }
.col1 { width: 76px; margin-left: 4px; }
.col2 { width: 87px; }
.recog { padding-left: 4px; }
.edit { padding-left: 3px; }
.logo { position: absolute; left: 1841px; top: -3px; }

/* main area */
.main { flex: 1; display: flex; min-height: 0; }
.panel { width: 311px; flex: none; display: flex; flex-direction: column; background: #c8c8c8; border-right: 3px solid #47474c; }
.ptabs { height: 30px; flex: none; display: flex; background: #696969; padding-top: 2px; }
.ptab { display: flex; align-items: center; height: 28px; color: #b8b8b8; border-right: 1px solid #4d4d4d; }
.ptab-on { width: 76px; background: #c8c8c8; color: #444; gap: 6px; padding-left: 11px; border-right: 0; }
.ptab-2 { width: 112px; gap: 4px; padding-left: 8px; }
.ptab-3 { width: 76px; gap: 6px; padding-left: 8px; }
.phead { height: 29px; flex: none; display: flex; align-items: center; padding-left: 15px; padding-bottom: 1px; }
.phead .hd { fill: #888; }
.phead strong { margin-left: 6px; color: #444; width: 162px; }
.phead .hcar { fill: #666; margin: 0 12px 0 8px; }
.phead svg:not(.hcar) { fill: #888; }
.t3 { margin-left: 3px; }
.tree { flex: 1; margin: 0 5px 0 8px; background: #eeeeee; }
.tree li { height: 24px; display: flex; align-items: center; gap: 5px; padding-left: 24px; color: #555; }
.tree .root { padding-left: 5px; gap: 6px; }
.axis { font: 6px "Open Sans", sans-serif; fill: #222; }
.pfoot { height: 34px; flex: none; display: flex; align-items: center; gap: 6px; padding-left: 16px; }
.pfoot strong { color: #444; }
.viewport { flex: 1; position: relative; background: #2e2d33; }
.scene { position: absolute; inset: 0; width: 100%; height: 100%; }
.vtools { position: absolute; z-index: 1; left: 656px; top: 7px; width: 296px; height: 31px; background: #e2e2e2; display: flex; align-items: center; gap: 4.500px; padding-left: 5px; }
.vt { width: 22px; height: 22px; display: flex; align-items: center; justify-content: center; }
.vt-on { background: #bdbdbd; border: 1px solid #777; }

/* status bar */
.status { height: 35px; flex: none; display: flex; align-items: center; background: #dedede; border-top: 2px solid #6a6a6a; padding-left: 6px; position: relative; }
.stbox { width: 22px; height: 24px; border: 1px solid #999; background: #d0d0d0; display: flex; align-items: center; justify-content: center; }
.stglobe { margin-left: 6px; }
.stwin { margin-left: 9px; }
.stsep { width: 1px; height: 26px; background: #9a9a9a; margin-left: 13px; }
.s2 { margin-left: 1449px; }
.s3 { margin-left: 41px; }
.stbtn { width: 27px; height: 24px; margin-left: 2px; background: #f4f4f4; border: 1px solid #ccc; display: flex; align-items: center; justify-content: center; }
.stdrop { width: 14px; height: 24px; background: #f4f4f4; border: 1px solid #ccc; border-left: 0; display: flex; align-items: center; justify-content: center; fill: #555; }
.s4 { margin-left: 3px; }
.combo { width: 177px; height: 24px; margin-left: 97px; border: 1px solid #b8b8b8; display: flex; align-items: center; padding-left: 8px; color: #777; fill: #777; }
.combo span { width: 153px; }
.combo i { width: 1px; height: 22px; background: #b8b8b8; margin-right: 5px; }

/* taskbar */
.taskbar { height: 40px; flex: none; display: flex; background: #070705; color: #ddd; }
.start { width: 48px; display: flex; align-items: center; justify-content: center; }
.search { width: 344px; display: flex; align-items: center; background: #2f2f2f; padding-left: 10px; gap: 10px; font-size: 14px; color: #a8a8a8; }
.search span { width: 268px; white-space: nowrap; }
.tasks { display: flex; }
.task { width: 49px; height: 40px; display: flex; align-items: center; justify-content: center; position: relative; }
.task.on::after { content: ""; position: absolute; left: 4px; right: 4px; bottom: 0; height: 2px; background: #f5f5c8; }
.task.active { background: #3a3a3a; }
.task.active::after { left: 0; right: 0; }
.birdtile { width: 22px; height: 26px; background: #eef5fc; border-radius: 3px; display: flex; align-items: center; justify-content: center; }
.small-tile { width: 16px; height: 16px; border-radius: 2px; }
.tray { margin-left: auto; width: 292px; display: flex; align-items: center; padding-right: 10px; }
.ti { width: 24px; display: flex; align-items: center; justify-content: center; }
.ime { font-size: 14px; color: #ddd; }
.clock { width: 68px; display: flex; flex-direction: column; align-items: center; line-height: 19px; color: #ddd; }
.notif { width: 46px; display: flex; justify-content: center; }

/* watermark overlay */
.watermark { position: absolute; left: 1709px; top: 1013px; width: 211px; height: 62px; background: rgba(255,255,255,.3); }
.wmlogo { position: absolute; left: 0; top: 2px; opacity: .75; }
.wmt { position: absolute; left: 71px; top: 2px; font: bold 29px/36px "Noto Sans CJK SC", sans-serif; color: rgba(32,128,72,.75); white-space: nowrap; }
.wmu { position: absolute; left: 60px; top: 39px; font: 15px/20px "Open Sans", sans-serif; color: rgba(70,70,70,.7); white-space: nowrap; }
```
